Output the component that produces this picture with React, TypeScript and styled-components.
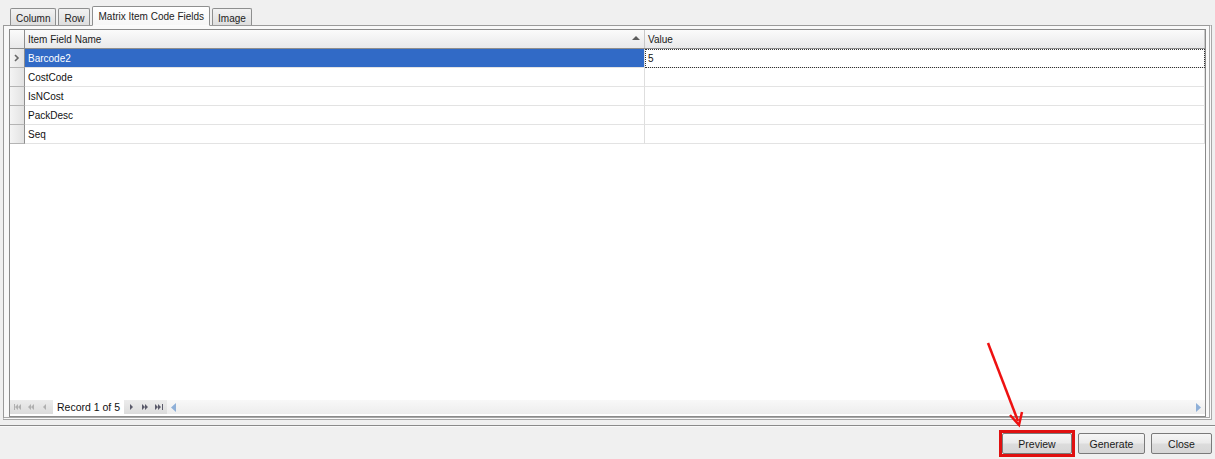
import React from "react";
import styled, { createGlobalStyle } from "styled-components";

const Global = createGlobalStyle`
  html, body { margin: 0; padding: 0; }
  body {
    background: #f0f0f0;
    font-family: "Liberation Sans", Arial, sans-serif;
    font-size: 10px;
    color: #000;
  }
`;

const Page = styled.div`
  position: relative;
  width: 1215px;
  height: 459px;
  display: flex;
  flex-direction: column;
  overflow: hidden;
`;

const TabArea = styled.div`
  display: flex;
  flex-direction: column;
  padding: 6px 3px 0 3px;
  height: 420px;
  box-sizing: border-box;
`;

const TabStrip = styled.div`
  display: flex;
  align-items: flex-end;
  gap: 2px;
  padding-left: 7px;
  height: 19px;
  position: relative;
  z-index: 1;
`;

const Tab = styled.div<{ $active?: boolean }>`
  height: ${(p) => (p.$active ? "20px" : "17px")};
  padding: 0 5px;
  box-sizing: border-box;
  border: 1px solid #8e8f8f;
  border-bottom: ${(p) => (p.$active ? "1px solid #fbfbfb" : "none")};
  border-radius: 2px 2px 0 0;
  background: ${(p) =>
    p.$active
      ? "linear-gradient(#ffffff, #f6f6f6)"
      : "linear-gradient(#f2f2f2, #dedede)"};
  display: flex;
  align-items: center;
  padding-top: ${(p) => (p.$active ? "0" : "2px")};
  color: #222;
  font-size: 10px;
  margin-bottom: ${(p) => (p.$active ? "-1px" : "0")};
  white-space: nowrap;
`;

const TabPanel = styled.div`
  flex: 1;
  border: 1px solid #9a9a9a;
  border-right: 3px double #a8a8a8;
  border-bottom: 3px double #a8a8a8;
  background: #f9f9f9;
  padding: 3px 3px 0 5px;
  display: flex;
  flex-direction: column;
`;

const Grid = styled.div`
  flex: 1;
  border: 1px solid #8a8a8a;
  background: #fff;
  display: flex;
  flex-direction: column;
`;

const Row = styled.div`
  display: grid;
  grid-template-columns: 15px 620px 1fr;
  height: 19px;
`;

const HeaderRow = styled(Row)`
  background: linear-gradient(#fbfbfb, #e9e9ea);
  border-bottom: 1px solid #8e8e8e;
  height: 18px;
`;

const HeadCell = styled.div`
  display: flex;
  align-items: center;
  padding-left: 3px;
  border-right: 1px solid #c8c8c8;
  color: #1a1a1a;
  font-size: 10px;
  position: relative;
`;

const IndicatorHead = styled.div`
  border-right: 1px solid #8e8e8e;
`;

const SortArrow = styled.span`
  position: absolute;
  right: 4px;
  top: 6px;
  width: 0;
  height: 0;
  border-left: 4px solid transparent;
  border-right: 4px solid transparent;
  border-bottom: 4px solid #5c5c5c;
`;

const Indicator = styled.div`
  background: linear-gradient(90deg, #f4f4f4, #e2e2e2);
  border-right: 1px solid #8e8e8e;
  border-bottom: 1px solid #b4b4b4;
  display: flex;
  align-items: center;
  justify-content: center;
`;

const Cell = styled.div<{ $selected?: boolean; $focused?: boolean }>`
  display: flex;
  align-items: center;
  padding-left: 3px;
  border-bottom: 1px solid #e3e3e3;
  border-right: 1px solid #dedede;
  background: ${(p) => (p.$selected ? "#316ac6" : "#fff")};
  color: ${(p) => (p.$selected ? "#fff" : "#111")};
  font-size: 10px;
  box-sizing: border-box;
  ${(p) => (p.$focused ? "outline: 1px dotted #333; outline-offset: -1px;" : "")}
`;

const GridBody = styled.div`
  flex: 1;
`;

const NavBar = styled.div`
  height: 16px;
  display: flex;
  align-items: center;
  margin-bottom: 1px;
`;

const NavGroup = styled.div`
  display: flex;
  align-items: center;
  gap: 5px;
  height: 14px;
  padding: 0 3px;
  background: linear-gradient(#ececec, #dcdcdc);
`;

const NavText = styled.span`
  padding: 0 4px;
  color: #111;
  font-size: 10.5px;
`;

const ScrollTrack = styled.div`
  flex: 1;
  height: 14px;
  display: flex;
  align-items: center;
  justify-content: space-between;
  padding: 0 4px;
  background: linear-gradient(#f8f8f8, #ededed);
`;

const Separator = styled.div`
  margin-top: 5px;
  height: 1px;
  background: #8a8a8a;
  border-bottom: 1px solid #fafafa;
`;

const Footer = styled.div`
  display: flex;
  justify-content: flex-end;
  align-items: center;
  padding: 3px 3px 0 0;
`;

const Button = styled.button<{ $w: number; $gap?: number }>`
  height: 21px;
  width: ${(p) => p.$w}px;
  margin-left: ${(p) => p.$gap ?? 0}px;
  padding: 0;
  border: 1px solid #7a7a7a;
  border-radius: 2px;
  background: linear-gradient(#f6f6f6 0%, #ebebeb 45%, #dcdcdc 55%, #d6d6d6 100%);
  font-family: "Liberation Sans", Arial, sans-serif;
  font-size: 10.5px;
  color: #1a1a1a;
`;

const Highlight = styled.div`
  border: 3px solid #e01010;
  display: flex;
`;

const ArrowOverlay = styled.svg`
  position: absolute;
  left: 975px;
  top: 335px;
  pointer-events: none;
`;

const NavIcon = ({ kind, color }: { kind: string; color: string }) => {
  const tri = (x: number, dir: 1 | -1) =>
    dir === -1
      ? `M${x} 1 L${x - 3} 4 L${x} 7 Z`
      : `M${x} 1 L${x + 3} 4 L${x} 7 Z`;
  let d = "";
  if (kind === "first") d = `M1 1 H2 V7 H1 Z ${tri(5, -1)} ${tri(8, -1)}`;
  if (kind === "prevpage") d = `${tri(4, -1)} ${tri(7, -1)}`;
  if (kind === "prev") d = `${tri(5, -1)}`;
  if (kind === "next") d = `${tri(3, 1)}`;
  if (kind === "nextpage") d = `${tri(1, 1)} ${tri(4, 1)}`;
  if (kind === "last") d = `${tri(0, 1)} ${tri(3, 1)} M7 1 H8 V7 H7 Z`;
  return (
    <svg width="9" height="8" viewBox="0 0 9 8">
      <path d={d} fill={color} />
    </svg>
  );
};

const Chevron = () => (
  <svg width="6" height="8" viewBox="0 0 6 8">
    <path d="M1 1 L4 4 L1 7" stroke="#666" strokeWidth="1.6" fill="none" />
  </svg>
);

const rows = ["Barcode2", "CostCode", "IsNCost", "PackDesc", "Seq"];

export default function App() {
  return (
    <Page>
      <Global />
      <TabArea>
        <TabStrip>
          <Tab>Column</Tab>
          <Tab>Row</Tab>
          <Tab $active>Matrix Item Code Fields</Tab>
          <Tab>Image</Tab>
        </TabStrip>
        <TabPanel>
          <Grid>
            <HeaderRow>
              <IndicatorHead />
              <HeadCell>
                Item Field Name
                <SortArrow />
              </HeadCell>
              <HeadCell>Value</HeadCell>
            </HeaderRow>
            <GridBody>
              {rows.map((r, i) => (
                <Row key={r}>
                  <Indicator>{i === 0 ? <Chevron /> : null}</Indicator>
                  <Cell $selected={i === 0}>{r}</Cell>
                  <Cell $focused={i === 0}>{i === 0 ? "5" : ""}</Cell>
                </Row>
              ))}
            </GridBody>
            <NavBar>
              <NavGroup>
                <NavIcon kind="first" color="#b0b0b0" />
                <NavIcon kind="prevpage" color="#b0b0b0" />
                <NavIcon kind="prev" color="#b0b0b0" />
              </NavGroup>
              <NavText>Record 1 of 5</NavText>
              <NavGroup>
                <NavIcon kind="next" color="#5a5a6a" />
                <NavIcon kind="nextpage" color="#5a5a6a" />
                <NavIcon kind="last" color="#5a5a6a" />
              </NavGroup>
              <ScrollTrack>
                <svg width="5" height="9" viewBox="0 0 5 9">
                  <path d="M5 0 L0 4.5 L5 9 Z" fill="#8fb0d8" />
                </svg>
                <svg width="5" height="9" viewBox="0 0 5 9">
                  <path d="M0 0 L5 4.5 L0 9 Z" fill="#8fb0d8" />
                </svg>
              </ScrollTrack>
            </NavBar>
          </Grid>
        </TabPanel>
      </TabArea>
      <Separator />
      <Footer>
        <Highlight>
          <Button $w={70}>Preview</Button>
        </Highlight>
        <Button $w={67} $gap={3}>Generate</Button>
        <Button $w={61} $gap={6}>Close</Button>
      </Footer>
      <ArrowOverlay width="60" height="95" viewBox="0 0 60 95">
        <line x1="13" y1="8" x2="43" y2="86" stroke="#ee1111" strokeWidth="2.5" />
        <path d="M35 80 L44 90 L47 77" stroke="#ee1111" strokeWidth="2.5" fill="none" />
      </ArrowOverlay>
    </Page>
  );
}
